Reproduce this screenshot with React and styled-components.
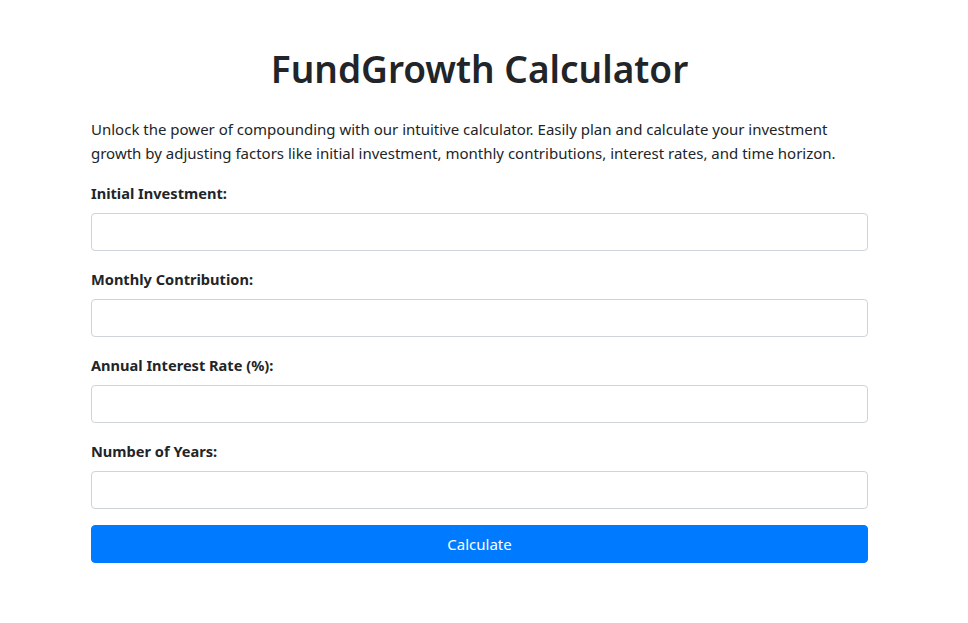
import styled, { createGlobalStyle } from "styled-components";

const GlobalStyle = createGlobalStyle`
  body {
    margin: 0;
    background: #fff;
    color: #212529;
    font-family: "Noto Sans", "Open Sans", sans-serif;
  }
  * { box-sizing: border-box; }
`

const fields = [
    {id: "initial", label: "Initial Investment:"},
    {id: "monthly", label: "Monthly Contribution:"},
    {id: "rate", label: "Annual Interest Rate (%):"},
    {id: "years", label: "Number of Years:"},
]

const App = () => {
    return (
    <Page>
        <GlobalStyle />
        <Container>
            <Title>FundGrowth Calculator</Title>
            <Intro>
                Unlock the power of compounding with our intuitive calculator. Easily plan and calculate your investment growth by adjusting factors like initial investment, monthly contributions, interest rates, and time horizon.
            </Intro>
            <form onSubmit={e => e.preventDefault()}>
                {fields.map(f => (
                    <FormGroup key={f.id}>
                        <Label htmlFor={f.id}>{f.label}</Label>
                        <Input id={f.id} type="number"/>
                    </FormGroup>
                ))}
                <Button type="submit">Calculate</Button>
            </form>
        </Container>
    </Page>
    )
}

const Page = styled.div`
  padding: 45px 9px 40px 0;
`

const Container = styled.div`
  width: 777px;
  margin: 0 auto;
`

const Title = styled.h1`
  font-size: 37px;
  font-weight: 600;
  line-height: 48px;
  text-align: center;
  margin: 0 0 24px;
`

const Intro = styled.p`
  font-size: 15px;
  line-height: 24px;
  margin: 0 0 16px;
`

const FormGroup = styled.div`
  margin-bottom: 16px;
`

const Label = styled.label`
  display: block;
  font-size: 14.6px;
  font-weight: 700;
  line-height: 24px;
  margin-bottom: 8px;
`

const Input = styled.input`
  display: block;
  width: 100%;
  height: 38px;
  padding: 6px 12px;
  font-size: 16px;
  border: 1px solid #ced4da;
  border-radius: 4px;
  outline: none;
  &::-webkit-inner-spin-button { display: none; }
`

const Button = styled.button`
  display: block;
  width: 100%;
  height: 38px;
  background: #007bff;
  color: #fff;
  border: 1px solid #007bff;
  border-radius: 4px;
  font-family: "Noto Sans", "Open Sans", sans-serif;
  font-size: 15px;
  cursor: pointer;
`

export default App
